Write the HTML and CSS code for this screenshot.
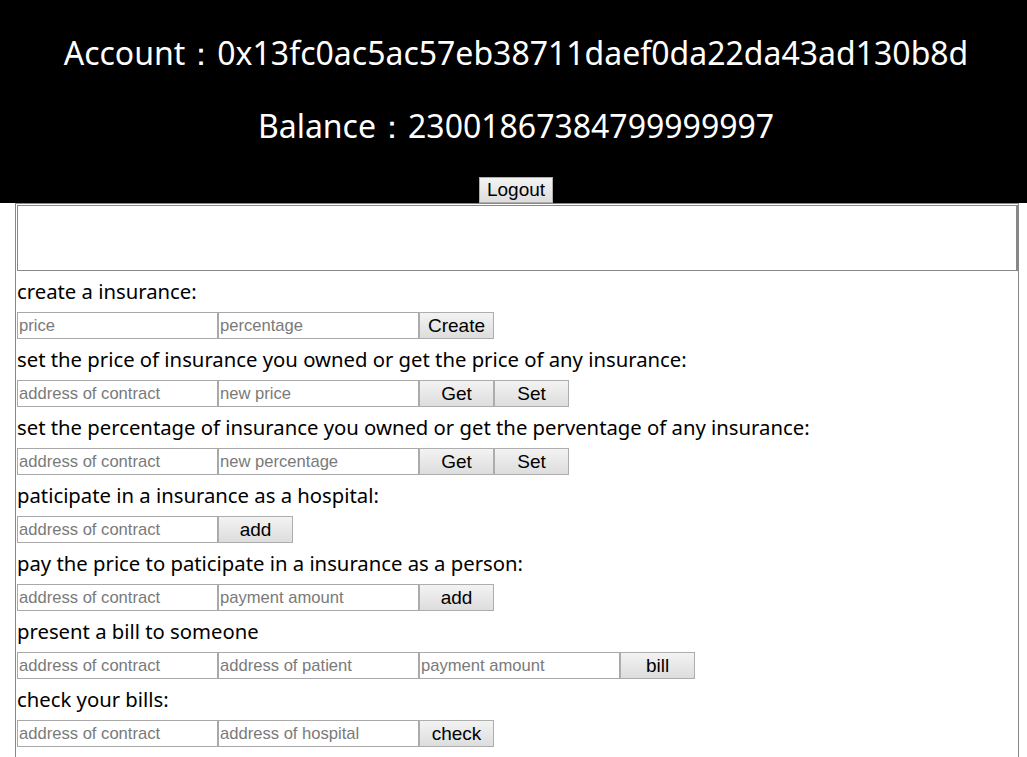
FILE: index.html
```html
<!DOCTYPE html>
<html>
<head>
<meta charset="utf-8">
<title>Insurance</title>
<link rel="stylesheet" href="styles.css">
</head>
<body>
<header class="top">
  <div class="line">Account：0x13fc0ac5ac57eb38711daef0da22da43ad130b8d</div>
  <div class="line">Balance：23001867384799999997</div>
  <button class="btn logout">Logout</button>
</header>
<main class="panel">
  <div class="output"></div>

  <div class="label">create a insurance:</div>
  <div class="row">
    <input class="field" placeholder="price">
    <input class="field" placeholder="percentage">
    <button class="btn">Create</button>
  </div>

  <div class="label">set the price of insurance you owned or get the price of any insurance:</div>
  <div class="row">
    <input class="field" placeholder="address of contract">
    <input class="field" placeholder="new price">
    <button class="btn">Get</button>
    <button class="btn">Set</button>
  </div>

  <div class="label">set the percentage of insurance you owned or get the perventage of any insurance:</div>
  <div class="row">
    <input class="field" placeholder="address of contract">
    <input class="field" placeholder="new percentage">
    <button class="btn">Get</button>
    <button class="btn">Set</button>
  </div>

  <div class="label">paticipate in a insurance as a hospital:</div>
  <div class="row">
    <input class="field" placeholder="address of contract">
    <button class="btn">add</button>
  </div>

  <div class="label">pay the price to paticipate in a insurance as a person:</div>
  <div class="row">
    <input class="field" placeholder="address of contract">
    <input class="field" placeholder="payment amount">
    <button class="btn">add</button>
  </div>

  <div class="label">present a bill to someone</div>
  <div class="row">
    <input class="field" placeholder="address of contract">
    <input class="field" placeholder="address of patient">
    <input class="field" placeholder="payment amount">
    <button class="btn">bill</button>
  </div>

  <div class="label">check your bills:</div>
  <div class="row">
    <input class="field" placeholder="address of contract">
    <input class="field" placeholder="address of hospital">
    <button class="btn">check</button>
  </div>
</main>
</body>
</html>
```

FILE: styles.css
```css
html, body {
  margin: 0;
  padding: 0;
  background: #fff;
}
body {
  font-family: "Noto Sans", "Open Sans", sans-serif;
  color: #000;
}
.top {
  background: #000;
  color: #fff;
  text-align: center;
  padding-top: 16px;
  padding-left: 5px;
  height: 187px;
}
.line {
  font-size: 32px;
  line-height: 73px;
  white-space: nowrap;
}
.btn {
  font-family: "Liberation Sans", Arial, sans-serif;
  font-size: 19px;
  color: #000;
  width: 75px;
  height: 27px;
  padding: 0;
  border: 1px solid #adadad;
  background: linear-gradient(#f3f3f3, #dddddd);
  box-sizing: border-box;
}
.logout {
  margin-top: 15px;
  width: 74px;
  height: 26px;
}
.panel {
  margin-left: 15px;
  width: 1004px;
  box-sizing: border-box;
  border: 1px solid #888;
  border-bottom: none;
  min-height: 560px;
  padding-top: 1px;
}
.output {
  height: 64px;
  border: 1px solid #888;
  margin-left: 1px;
  border-right-width: 2px;
}
.label {
  font-size: 20.3px;
  line-height: 41px;
  padding-left: 1px;
  white-space: nowrap;
}
.row {
  display: flex;
  padding-left: 1px;
  height: 27px;
}
.field {
  width: 201px;
  height: 27px;
  box-sizing: border-box;
  border: 1px solid #a9a9a9;
  padding: 0 1px;
  margin: 0;
  font-family: "Liberation Sans", Arial, sans-serif;
  font-size: 16.6px;
  color: #000;
  background: #fff;
  outline: none;
}
.field::placeholder {
  color: #7a7a7a;
}
```
